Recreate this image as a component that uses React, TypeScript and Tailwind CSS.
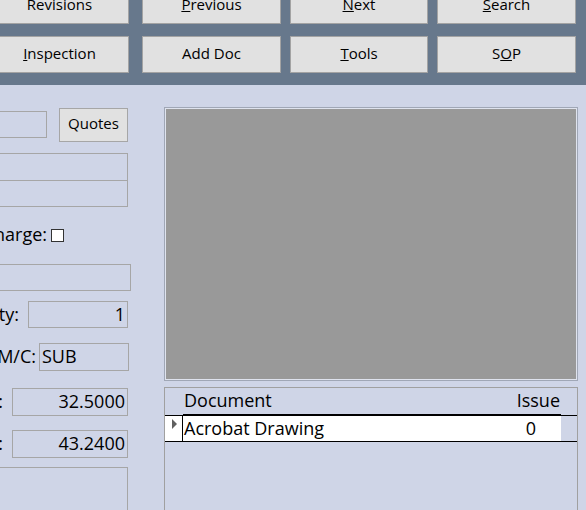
import React from "react";

function HBtn({ children, w, ml }: { children: React.ReactNode; w: string; ml: string }) {
  return (
    <div
      className={`${w} ${ml} h-[37px] shrink-0 bg-[#e1e1e1] border border-[#a3a3a3] flex items-center justify-center text-[15px] leading-none pb-[2px]`}
    >
      <span>{children}</span>
    </div>
  );
}

export default function App() {
  return (
    <div className="w-[586px] h-[510px] overflow-hidden bg-[#cfd5e7] font-['Open_Sans',sans-serif] text-black">
      <header className="h-[85px] bg-[#67788c] overflow-hidden">
        <div className="flex flex-col gap-[12px] mt-[-13px] ml-[-10px]">
          <div className="flex">
            <HBtn w="w-[139px]" ml="ml-0">Revisions</HBtn>
            <HBtn w="w-[139px]" ml="ml-[13px]"><u>P</u>revious</HBtn>
            <HBtn w="w-[138px]" ml="ml-[9px]"><u>N</u>ext</HBtn>
            <HBtn w="w-[139px]" ml="ml-[9px]"><u>S</u>earch</HBtn>
          </div>
          <div className="flex">
            <HBtn w="w-[139px]" ml="ml-0"><u>I</u>nspection</HBtn>
            <HBtn w="w-[139px]" ml="ml-[13px]">Add Doc</HBtn>
            <HBtn w="w-[138px]" ml="ml-[9px]"><u>T</u>ools</HBtn>
            <HBtn w="w-[139px]" ml="ml-[9px]">S<u>O</u>P</HBtn>
          </div>
        </div>
      </header>

      <div className="flex">
        {/* left column */}
        <div className="w-[131px] shrink-0 flex flex-col text-[18px] leading-none">
          {/* row 1 */}
          <div className="mt-[23px] flex items-start h-[34px]">
            <div className="mt-[3px] ml-[-20px] w-[67px] h-[27px] border border-[#a6a6a6]" />
            <div className="ml-[12px] w-[69px] h-[34px] bg-[#e1e1e1] border border-[#a6a6a6] flex items-center justify-center text-[15px] pb-[3px]">
              Quotes
            </div>
          </div>
          {/* stacked fields */}
          <div className="mt-[11px] ml-[-20px] w-[148px] border border-[#a6a6a6] flex flex-col">
            <div className="h-[26px]" />
            <div className="h-[26px] border-t border-[#a6a6a6]" />
          </div>
          {/* surcharge */}
          <div className="mt-[15px] h-[26px] flex items-center">
            <div className="w-[47px] flex justify-end whitespace-nowrap pb-[3px]">Surcharge:</div>
            <div className="ml-[4px] w-[13px] h-[13px] border border-[#333] bg-white" />
          </div>
          {/* field 4 */}
          <div className="mt-[16px] ml-[-20px] w-[151px] h-[27px] border border-[#a6a6a6]" />
          {/* quantity */}
          <div className="mt-[10px] h-[27px] flex items-center">
            <div className="w-[28px] pr-[9px] flex justify-end whitespace-nowrap pb-[2px]">Quantity:</div>
            <div className="w-[100px] h-[27px] border border-[#a6a6a6] flex items-center justify-end pr-[2px] pb-[2px]">1</div>
          </div>
          {/* M/C */}
          <div className="mt-[15px] h-[28px] flex items-center">
            <div className="w-[39px] pr-[3px] flex justify-end whitespace-nowrap pb-[2px]">Sub M/C:</div>
            <div className="w-[90px] h-[28px] border border-[#a6a6a6] flex items-center pl-[2px] pb-[2px]">SUB</div>
          </div>
          {/* cost */}
          <div className="mt-[17px] h-[28px] flex items-center">
            <div className="w-[12px] pr-[9px] flex justify-end whitespace-nowrap pb-[2px]">Cost:</div>
            <div className="w-[116px] h-[28px] border border-[#a6a6a6] flex items-center justify-end pr-[2px] pb-[2px]">32.5000</div>
          </div>
          {/* price */}
          <div className="mt-[14px] h-[28px] flex items-center">
            <div className="w-[12px] pr-[9px] flex justify-end whitespace-nowrap pb-[2px]">Price:</div>
            <div className="w-[116px] h-[28px] border border-[#a6a6a6] flex items-center justify-end pr-[2px] pb-[2px]">43.2400</div>
          </div>
          {/* big field */}
          <div className="mt-[9px] ml-[-20px] w-[148px] h-[80px] border border-[#a6a6a6]" />
        </div>

        {/* right panel */}
        <div className="ml-[33px] w-[414px] shrink-0 flex flex-col">
          <div className="mt-[22px] h-[274px] border border-[#a0a7b6]">
            <div className="w-full h-full border border-[#dfe3ee] bg-[#999999]" />
          </div>
          <div className="mt-[6px] h-[140px] border border-[#a0a0a0] border-b-0 text-[18px] leading-none">
            <div className="flex border-b border-black">
              <div className="w-[18px] shrink-0" />
              <div className="w-[378px] shrink-0 h-[27px] border-b border-black flex items-center pb-[2px]">
                <span className="pl-[1px]">Document</span>
                <span className="ml-auto pr-[1px]">Issue</span>
              </div>
            </div>
            <div className="flex border-b border-black h-[26px]">
              <div className="w-[18px] shrink-0 bg-white border-r border-black pl-[7px] pt-[3px]">
                <svg width="5" height="10" viewBox="0 0 5 10">
                  <polygon points="0,0 5,5 0,10" fill="#606060" />
                </svg>
              </div>
              <div className="w-[378px] shrink-0 bg-white flex items-center pb-[1px]">
                <span className="pl-[1px]">Acrobat Drawing</span>
                <span className="ml-auto mr-[25px]">0</span>
              </div>
            </div>
          </div>
        </div>
      </div>
    </div>
  );
}
